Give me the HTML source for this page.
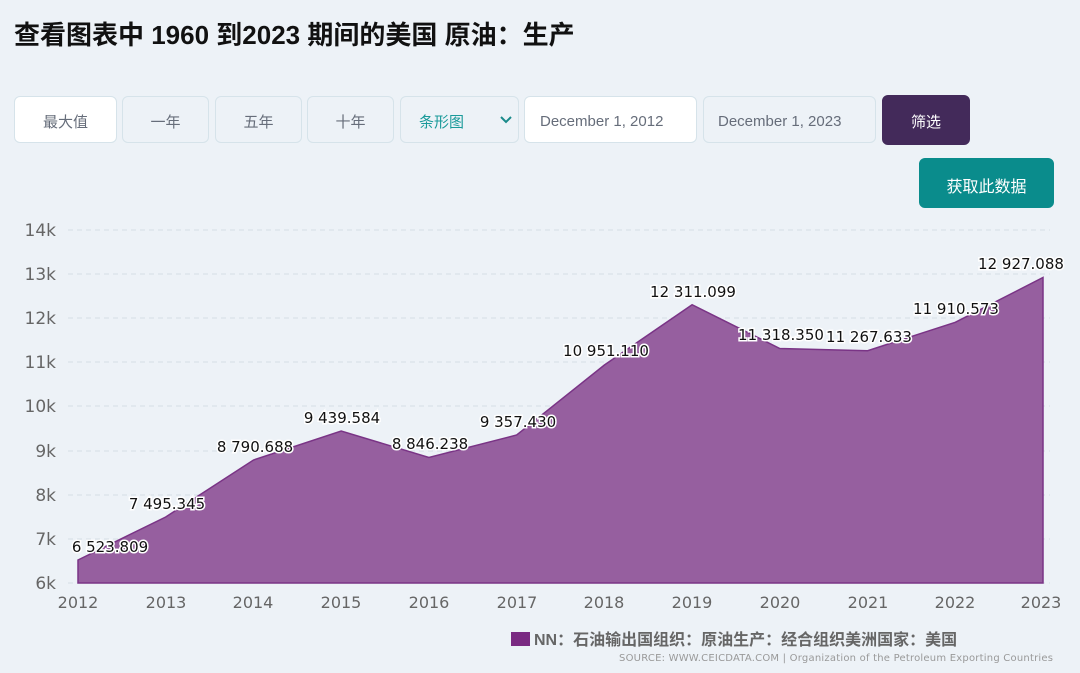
<!DOCTYPE html>
<html><head><meta charset="utf-8"><style>
body{margin:0;width:1080px;height:673px;background:#edf2f7;font-family:"Liberation Sans","Noto Sans CJK SC",sans-serif;position:relative;overflow:hidden}
h1{position:absolute;left:14px;top:15px;margin:0;font-size:26px;font-weight:bold;color:#111}
.b{position:absolute;top:96px;height:47px;box-sizing:border-box;border:1px solid #d6e3ea;border-radius:6px;background:#edf2f7;color:#666d7a;font-size:15px;display:flex;align-items:center;justify-content:center;padding-top:3px}
</style></head><body>
<h1>查看图表中 1960 到2023 期间的美国 原油：生产</h1>
<div class="b" style="left:14px;width:103px;background:#fff">最大值</div>
<div class="b" style="left:122px;width:87px">一年</div>
<div class="b" style="left:215px;width:87px">五年</div>
<div class="b" style="left:307px;width:87px">十年</div>
<div class="b" style="left:400px;width:119px;color:#1a9a9a;justify-content:flex-start;padding-left:18px">条形图<svg style="position:absolute;right:6px;top:18px" width="12" height="10"><path d="M1 2 L6 7 L11 2" stroke="#1a8a8a" stroke-width="2" fill="none"/></svg></div>
<div class="b" style="left:524px;width:173px;background:#fff;justify-content:flex-start;padding-left:15px">December 1, 2012</div>
<div class="b" style="left:703px;width:173px;justify-content:flex-start;padding-left:14px">December 1, 2023</div>
<div class="b" style="left:882px;width:88px;background:#432a5a;border-color:#432a5a;color:#fff;top:95px;height:50px">筛选</div>
<div class="b" style="left:919px;top:158px;width:135px;height:50px;background:#0a8c8c;border-color:#0a8c8c;color:#fff;font-size:16px">获取此数据</div>
<svg style="position:absolute;left:0;top:0" width="1080" height="673">
<g stroke="#d5dde4" stroke-dasharray="5,4" stroke-width="1">
<line x1="68" x2="1050" y1="230" y2="230"/><line x1="68" x2="1050" y1="274" y2="274"/><line x1="68" x2="1050" y1="318" y2="318"/><line x1="68" x2="1050" y1="362" y2="362"/><line x1="68" x2="1050" y1="406" y2="406"/><line x1="68" x2="1050" y1="451" y2="451"/><line x1="68" x2="1050" y1="495" y2="495"/><line x1="68" x2="1050" y1="539" y2="539"/><line x1="68" x2="1050" y1="583" y2="583"/>
</g>
<g font-size="17" fill="#666" font-family="DejaVu Sans" text-anchor="end">
<text x="56" y="236">14k</text><text x="56" y="280">13k</text><text x="56" y="324">12k</text><text x="56" y="368">11k</text><text x="56" y="412">10k</text><text x="56" y="457">9k</text><text x="56" y="501">8k</text><text x="56" y="545">7k</text><text x="56" y="589">6k</text>
</g>
<path d="M78,560 L165.7,517 L253.5,460 L341.2,431 L428.9,457.5 L516.7,435 L604.4,365 L692.1,304.7 L779.8,348.5 L867.6,350.7 L955.3,322.3 L1043,277.5 L1043,583 L78,583Z" fill="#965f9f" stroke="#7a3486" stroke-width="1.5"/>
<g font-size="16" fill="#666" font-family="DejaVu Sans" text-anchor="middle">
<text x="78" y="608">2012</text><text x="166" y="608">2013</text><text x="253" y="608">2014</text><text x="341" y="608">2015</text><text x="429" y="608">2016</text><text x="517" y="608">2017</text><text x="604" y="608">2018</text><text x="692" y="608">2019</text><text x="780" y="608">2020</text><text x="868" y="608">2021</text><text x="955" y="608">2022</text><text x="1041" y="608">2023</text>
</g>
<g font-size="15" fill="#111" font-family="DejaVu Sans" text-anchor="middle" stroke="#fff" stroke-width="3" paint-order="stroke">
<text x="110" y="552">6 523.809</text><text x="167" y="509">7 495.345</text><text x="255" y="452">8 790.688</text><text x="342" y="423">9 439.584</text><text x="430" y="449">8 846.238</text><text x="518" y="427">9 357.430</text><text x="606" y="356">10 951.110</text><text x="693" y="297">12 311.099</text><text x="781" y="340">11 318.350</text><text x="869" y="342">11 267.633</text><text x="956" y="314">11 910.573</text><text x="1021" y="269">12 927.088</text>
</g>
<rect x="511" y="632" width="19" height="14" fill="#7a2a82"/>
<text x="534" y="645" font-size="16" font-weight="bold" fill="#666" font-family="Liberation Sans,Noto Sans CJK SC,sans-serif">NN：石油输出国组织：原油生产：经合组织美洲国家：美国</text>
<text x="1053" y="661" font-size="10" fill="#999" text-anchor="end" font-family="DejaVu Sans" textLength="434">SOURCE: WWW.CEICDATA.COM | Organization of the Petroleum Exporting Countries</text>
</svg>
</body></html>
